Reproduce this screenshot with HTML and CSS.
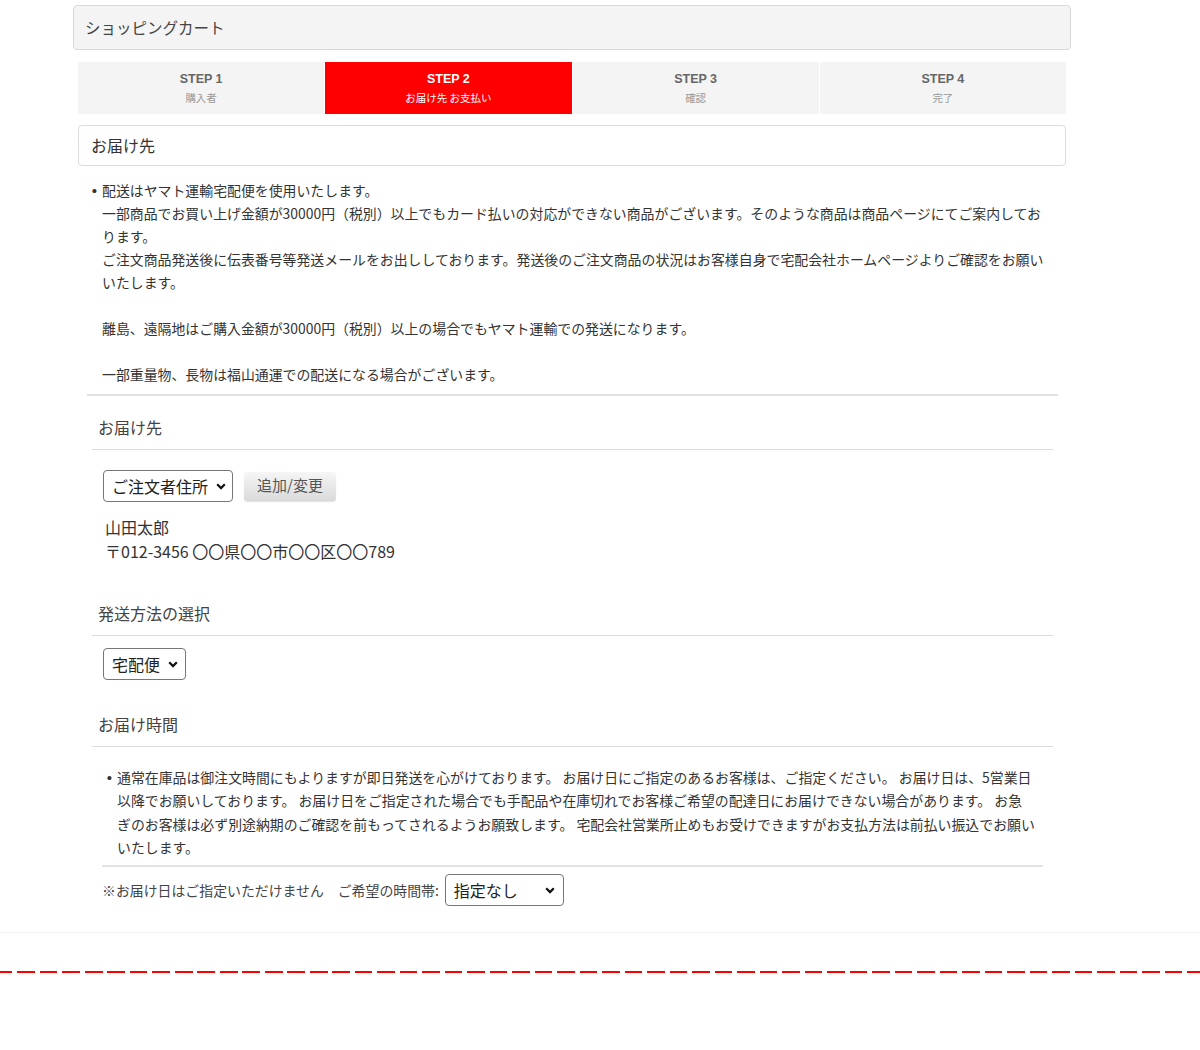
FILE: index.html
```html
<!DOCTYPE html>
<html lang="ja">
<head>
<meta charset="utf-8">
<title>ショッピングカート</title>
<link rel="stylesheet" href="styles.css">
</head>
<body>
<div class="page">
  <div class="cart-title">ショッピングカート</div>
  <div class="inner">
    <ol class="steps">
      <li class="step"><span class="step-no">STEP 1</span><span class="step-name">購入者</span></li>
      <li class="step active"><span class="step-no">STEP 2</span><span class="step-name">お届け先 お支払い</span></li>
      <li class="step"><span class="step-no">STEP 3</span><span class="step-name">確認</span></li>
      <li class="step"><span class="step-no">STEP 4</span><span class="step-name">完了</span></li>
    </ol>

    <div class="box-title">お届け先</div>

    <div class="notice">
      <ul class="notice-list">
        <li>配送はヤマト運輸宅配便を使用いたします。<br>一部商品でお買い上げ金額が30000円（税別）以上でもカード払いの対応ができない商品がございます。そのような商品は商品ページにてご案内してお<br>ります。<br>ご注文商品発送後に伝表番号等発送メールをお出ししております。発送後のご注文商品の状況はお客様自身で宅配会社ホームページよりご確認をお願い<br>いたします。<br><br>離島、遠隔地はご購入金額が30000円（税別）以上の場合でもヤマト運輸での発送になります。<br><br>一部重量物、長物は福山通運での配送になる場合がございます。</li>
      </ul>
    </div>

    <div class="section">
      <h2 class="section-head">お届け先</h2>
      <div class="address-controls">
        <select class="select select-addr">
          <option>ご注文者住所</option>
        </select>
        <button class="btn-gray" type="button">追加/変更</button>
      </div>
      <div class="address">
        <div>山田太郎</div>
        <div>〒012-3456 〇〇県〇〇市〇〇区〇〇789</div>
      </div>

      <h2 class="section-head">発送方法の選択</h2>
      <div class="method">
        <select class="select select-method">
          <option>宅配便</option>
        </select>
      </div>

      <h2 class="section-head">お届け時間</h2>
      <ul class="time-list">
        <li>通常在庫品は御注文時間にもよりますが即日発送を心がけております。 お届け日にご指定のあるお客様は、ご指定ください。 お届け日は、5営業日<br>以降でお願いしております。 お届け日をご指定された場合でも手配品や在庫切れでお客様ご希望の配達日にお届けできない場合があります。 お急<br>ぎのお客様は必ず別途納期のご確認を前もってされるようお願致します。 宅配会社営業所止めもお受けできますがお支払方法は前払い振込でお願い<br>いたします。</li>
      </ul>
      <div class="time-row">
        <span class="time-note">※お届け日はご指定いただけません　ご希望の時間帯:</span>
        <select class="select select-time">
          <option>指定なし</option>
        </select>
      </div>
    </div>
  </div>
</div>
<div class="page-end"></div>
<div class="cut-line"></div>
</body>
</html>
```

FILE: styles.css
```css
* {
  box-sizing: border-box;
}

html, body {
  margin: 0;
  padding: 0;
  background: #fff;
}

body {
  font-family: "Noto Sans CJK JP", "Noto Sans", sans-serif;
  color: #333;
  width: 1200px;
}

.page {
  width: 998px;
  margin-left: 73px;
  padding-top: 5px;
}

.cart-title {
  height: 45px;
  line-height: 42px;
  border: 1px solid #d8d8d8;
  border-radius: 4px;
  background: #f4f4f4;
  padding: 0 11px;
  font-size: 15.5px;
  color: #444;
}

.inner {
  padding: 0 5px;
}

/* steps */
.steps {
  list-style: none;
  margin: 12px 0 0;
  padding: 0;
  display: grid;
  grid-template-columns: repeat(4, 1fr);
  column-gap: 1px;
  height: 52px;
}

.step {
  background: #f4f4f4;
  display: flex;
  flex-direction: column;
  align-items: center;
  padding-top: 9px;
}

.step-no {
  font-family: "Liberation Sans", Arial, sans-serif;
  font-weight: bold;
  font-size: 12.5px;
  line-height: 16px;
  color: #666;
}

.step-name {
  margin-top: 3px;
  font-size: 10.5px;
  line-height: 16px;
  color: #999;
}

.step.active {
  background: #ff0000;
}

.step.active .step-no,
.step.active .step-name {
  color: #fff;
}

.box-title {
  margin-top: 11px;
  height: 41px;
  line-height: 38px;
  border: 1px solid #dcdcdc;
  border-radius: 4px;
  padding: 0 12px;
  font-size: 16px;
  color: #333;
}

/* notice */
.notice {
  margin: 0 8px 0 9px;
  padding: 13px 0 8px;
  border-bottom: 2px solid #e2e2e2;
}

.notice-list {
  margin: 0;
  padding: 0 0 0 15px;
  font-size: 13.9px;
  line-height: 23px;
  color: #333;
  white-space: nowrap;
}

.notice-list li,
.time-list li {
  list-style: disc;
}

.notice-list li::marker,
.time-list li::marker {
  content: "•\2005\200A";
  font-family: "Liberation Sans", Arial, sans-serif;
  font-size: 15px;
  color: #333;
}

/* sections */
.section {
  margin: 0 13px 0 14px;
}

.section-head {
  margin: 0;
  padding: 20px 6px 11px;
  font-size: 16px;
  line-height: 22px;
  font-weight: normal;
  color: #444;
  border-bottom: 1px solid #dcdcdc;
}

.address-controls {
  display: flex;
  align-items: center;
  gap: 11px;
  margin: 20px 0 0 11px;
}

.select {
  appearance: none;
  -webkit-appearance: none;
  height: 32px;
  border: 1px solid #767676;
  border-radius: 4px;
  background: #fff url("data:image/svg+xml,%3Csvg xmlns='http://www.w3.org/2000/svg' width='10' height='7' viewBox='0 0 10 7'%3E%3Cpath d='M1.2 1.3l3.8 3.8 3.8-3.8' fill='none' stroke='%23111' stroke-width='2.2'/%3E%3C/svg%3E") no-repeat;
  font-family: "Noto Sans CJK JP", sans-serif;
  font-size: 16px;
  color: #222;
  padding: 0 0 0 8px;
  line-height: 30px;
}

.select-addr {
  width: 130px;
  background-position: right 6px center;
}

.btn-gray {
  height: 29px;
  width: 92px;
  border: none;
  border-radius: 3px;
  background: linear-gradient(#f6f6f6, #dadada);
  box-shadow: 0 1px 1px rgba(0, 0, 0, 0.12);
  font-family: "Noto Sans CJK JP", sans-serif;
  font-size: 15px;
  line-height: 26px;
  color: #555;
  padding: 0 0 2px;
}

.address {
  margin: 13px 0 19px 13px;
  font-size: 16px;
  line-height: 24px;
  color: #333;
}

.method {
  margin: 12px 0 13px 11px;
}

.select-method {
  width: 83px;
  background-position: right 7px center;
}

.time-list {
  margin: 0 10px;
  padding: 19px 0 6px 15px;
  font-size: 13.9px;
  line-height: 23.3px;
  color: #333;
  white-space: nowrap;
  border-bottom: 2px solid #e2e2e2;
}

.time-row {
  display: flex;
  align-items: center;
  gap: 6px;
  margin: 7px 0 0 10px;
  padding-bottom: 26px;
}

.time-note {
  font-size: 13.9px;
  color: #444;
}

.select-time {
  width: 119px;
  background-position: right 8px center;
}

.page-end {
  border-top: 1px solid #f0f0f0;
  width: 1200px;
}

.cut-line {
  margin-top: 38px;
  height: 2px;
  width: 1200px;
  background: repeating-linear-gradient(to right, #ff0000 0 17.5px, transparent 17.5px 22.5px);
  background-position: -5px 0;
}
```
